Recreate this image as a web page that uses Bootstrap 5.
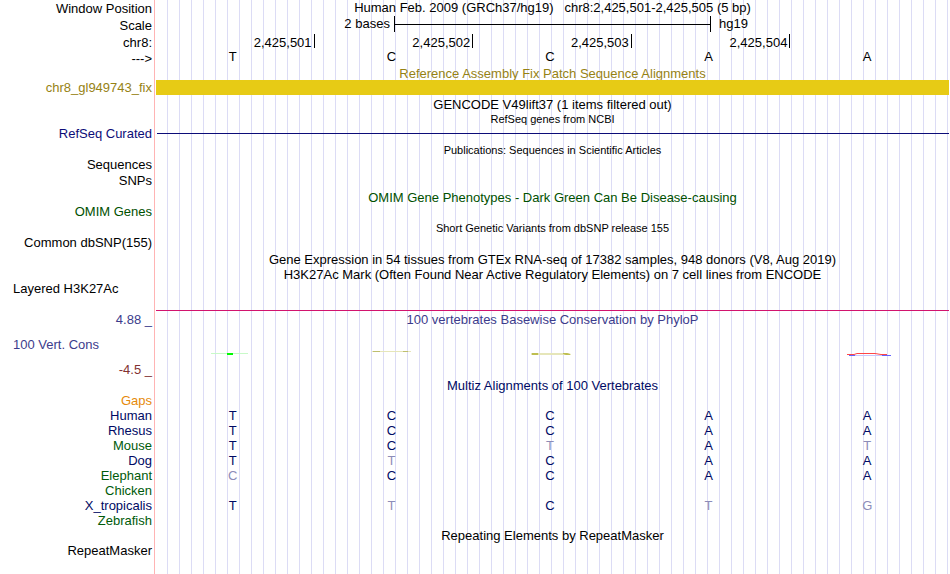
<!DOCTYPE html>
<html lang="en">

<head>
  <meta charset="UTF-8">
  <meta name="viewport" content="width=device-width, initial-scale=1.0">
  <title>Human hg19 chr8:2,425,501-2,425,505</title>
  <!-- Bootstrap CSS -->
  <link href="https://cdn.jsdelivr.net/npm/bootstrap@5.3.3/dist/css/bootstrap.min.css" rel="stylesheet">
  <!-- Custom CSS -->
  <style>
    body {
      font-family: "Liberation Sans", Arial, sans-serif;
      font-size: 13px;
      line-height: 15px;
      color: #000;
      background-color: #fff;
    }

    /* label column, pink divider and the vertical guide lines */
    .browser {
      padding-right: 1px;
      background-image:
        linear-gradient(90deg, #fff 154px, #ffb4b4 154px, #ffb4b4 155px, #fff 155px, #fff 156px, transparent 156px),
        repeating-linear-gradient(90deg, #dcdcf5 0, #dcdcf5 1px, transparent 1px, transparent 12px);
      background-position: 0 0, -1px 0;
      background-repeat: no-repeat, repeat;
      background-size: 100% 100%, 12px 100%;
    }

    .side {
      flex: 0 0 156px;
      width: 156px;
      padding: 0 4px 0 0;
      text-align: right;
      font-weight: 400;
      white-space: nowrap;
    }

    .side-left {
      padding-left: 13px;
      text-align: left;
    }

    .title {
      flex: 1 1 0;
      text-align: center;
      white-space: nowrap;
    }

    .h14 { height: 14px; line-height: 14px; }
    .h15 { height: 15px; line-height: 15px; }
    .h16 { height: 16px; line-height: 18px; }
    .h17 { height: 17px; line-height: 19px; }
    .h18 { height: 18px; line-height: 18px; }
    .h26 { height: 26px; line-height: 20px; }
    .line-16 { line-height: 16px; }
    .line-20 { line-height: 20px; }

    .note { font-size: 11px; }

    .cell {
      width: 20%;
      padding: 0 5px 0 0;
      text-align: center;
    }

    .tick {
      width: 20%;
      height: 14px;
      padding-right: 2px;
      text-align: right;
      border-right: 1px solid #000;
    }

    .ruler-side { width: 30%; }

    .ruler {
      width: 40%;
      height: 16px;
      border: solid #000;
      border-width: 0 1px;
    }

    .ruler hr {
      width: 100%;
      margin: 0;
      border-color: #000;
      opacity: 1;
    }

    .patch-bar { background-color: #e7cb15; }
    .curated-line { height: 1px; margin-left: 1px; background-color: #0c0c78; }
    .signal-line { height: 1px; margin: 14px 0 0 156px; background-color: #d2146e; }

    .olive { color: #968214; }
    .navy { color: #0c0c78; }
    .blue { color: #000a64; }
    .green { color: #005a0a; }
    .dark-green { color: #005000; }
    .slate { color: #3c3c8c; }
    .maroon { color: #823232; }
    .orange { color: #e68a0a; }

    .species { table-layout: fixed; }
    .species td { color: #000a64; }
    .species td.diff { color: #8c8cb8; }
  </style>
</head>

<body>

  <main class="browser min-vh-100">
    <!-- Position and scale -->
    <div class="d-flex h16">
      <div class="side">Window Position</div>
      <div class="title h15">Human Feb. 2009 (GRCh37/hg19) &nbsp; chr8:2,425,501-2,425,505 (5 bp)</div>
    </div>
    <div class="d-flex h18">
      <div class="side line-20">Scale</div>
      <div class="d-flex flex-fill align-items-center h16">
        <div class="ruler-side text-end pe-1">2 bases</div>
        <div class="ruler d-flex align-items-center"><hr></div>
        <div class="ruler-side ps-2">hg19</div>
      </div>
    </div>
    <div class="d-flex h16">
      <div class="side">chr8:</div>
      <div class="d-flex flex-fill">
        <div class="tick">2,425,501</div>
        <div class="tick">2,425,502</div>
        <div class="tick">2,425,503</div>
        <div class="tick">2,425,504</div>
      </div>
    </div>
    <div class="d-flex h16">
      <div class="side">---&gt;</div>
      <div class="d-flex flex-fill h14">
        <div class="cell">T</div>
        <div class="cell">C</div>
        <div class="cell">C</div>
        <div class="cell">A</div>
        <div class="cell">A</div>
      </div>
    </div>

    <!-- Fix patches -->
    <div class="d-flex h14 olive">
      <div class="side"></div>
      <div class="title line-16">Reference Assembly Fix Patch Sequence Alignments</div>
    </div>
    <div class="d-flex h15 olive">
      <div class="side">chr8_gl949743_fix</div>
      <div class="patch-bar flex-fill position-relative"></div>
    </div>

    <!-- Genes -->
    <div class="d-flex h17">
      <div class="side"></div>
      <div class="title">GENCODE V49lift37 (1 items filtered out)</div>
    </div>
    <div class="d-flex h14 note">
      <div class="side"></div>
      <div class="title">RefSeq genes from NCBI</div>
    </div>
    <div class="d-flex h15 navy">
      <div class="side">RefSeq Curated</div>
      <div class="d-flex flex-fill align-items-center">
        <div class="curated-line flex-fill"></div>
      </div>
    </div>

    <!-- Literature -->
    <div class="d-flex h16 note">
      <div class="side"></div>
      <div class="title">Publications: Sequences in Scientific Articles</div>
    </div>
    <div class="side h15">Sequences</div>
    <div class="side h16">SNPs</div>

    <!-- Phenotypes and variants -->
    <div class="d-flex h17 dark-green">
      <div class="side"></div>
      <div class="title">OMIM Gene Phenotypes - Dark Green Can Be Disease-causing</div>
    </div>
    <div class="side h14 dark-green">OMIM Genes</div>
    <div class="d-flex h17 note">
      <div class="side"></div>
      <div class="title">Short Genetic Variants from dbSNP release 155</div>
    </div>
    <div class="side h14">Common dbSNP(155)</div>

    <!-- Expression and regulation -->
    <div class="d-flex h17">
      <div class="side"></div>
      <div class="title">Gene Expression in 54 tissues from GTEx RNA-seq of 17382 samples, 948 donors (V8, Aug 2019)</div>
    </div>
    <div class="d-flex h15">
      <div class="side"></div>
      <div class="title">H3K27Ac Mark (Often Found Near Active Regulatory Elements) on 7 cell lines from ENCODE</div>
    </div>
    <div class="side side-left h14">Layered H3K27Ac</div>
    <div class="signal-line"></div>

    <!-- Conservation -->
    <div class="d-flex h18 slate">
      <div class="side">4.88 _</div>
      <div class="title">100 vertebrates Basewise Conservation by PhyloP</div>
    </div>
    <div class="d-flex pt-2 slate">
      <div class="side side-left h15">100 Vert. Cons</div>
      <div class="d-flex flex-fill align-items-end">
        <div class="cell"></div>
        <div class="cell d-flex justify-content-center">
          <svg width="48" height="8" viewBox="0 0 48 8">
            <path d="M5 7h39v1H5z" fill="#e6e6b9"/>
            <path d="M6 7h7v1H6zM36 7h5v1h-5z" fill="#bebe6e"/>
          </svg>
        </div>
      </div>
    </div>
    <div class="d-flex h26 maroon">
      <div class="side pt-2">-4.5 _</div>
      <div class="d-flex flex-fill">
        <div class="cell d-flex justify-content-center">
          <svg width="48" height="8" viewBox="0 0 48 8" shape-rendering="crispEdges">
            <path d="M2 1h37v1H2z" fill="#c8fac8"/>
            <path d="M18 1h6v2h-6z" fill="#00fa00"/>
          </svg>
        </div>
        <div class="cell"></div>
        <div class="cell d-flex justify-content-center">
          <svg width="48" height="8" viewBox="0 0 48 8">
            <path d="M5 1h37l3 1v1H5z" fill="#e6e6b9"/>
            <path d="M6 1h6v2H6zM37 1h4l3 1v1h-4l-3-1z" fill="#bebe50"/>
          </svg>
        </div>
        <div class="cell"></div>
        <div class="cell d-flex justify-content-center">
          <svg width="48" height="8" viewBox="0 0 48 8">
            <path d="M6 3.500h42" stroke="#c8c8ff"/>
            <path d="M6 3.500h6M39 3.500h9" stroke="#6464ff"/>
            <path d="M4 2.500h7L14 1.500h18l6 1h6" fill="none" stroke="#ff4646"/>
          </svg>
        </div>
      </div>
    </div>

    <!-- Alignments -->
    <div class="d-flex h15 blue">
      <div class="side"></div>
      <div class="title">Multiz Alignments of 100 Vertebrates</div>
    </div>
    <table class="species w-100">
      <colgroup>
        <col style="width: 156px">
        <col span="5">
      </colgroup>
      <tbody>
        <tr class="h15"><th scope="row" class="side orange">Gaps</th><td class="cell"></td><td class="cell"></td><td class="cell"></td><td class="cell"></td><td class="cell"></td></tr>
        <tr class="h15"><th scope="row" class="side blue">Human</th><td class="cell">T</td><td class="cell">C</td><td class="cell">C</td><td class="cell">A</td><td class="cell">A</td></tr>
        <tr class="h15"><th scope="row" class="side blue">Rhesus</th><td class="cell">T</td><td class="cell">C</td><td class="cell">C</td><td class="cell">A</td><td class="cell">A</td></tr>
        <tr class="h15"><th scope="row" class="side green">Mouse</th><td class="cell">T</td><td class="cell">C</td><td class="cell diff">T</td><td class="cell">A</td><td class="cell diff">T</td></tr>
        <tr class="h15"><th scope="row" class="side blue">Dog</th><td class="cell">T</td><td class="cell diff">T</td><td class="cell">C</td><td class="cell">A</td><td class="cell">A</td></tr>
        <tr class="h15"><th scope="row" class="side green">Elephant</th><td class="cell diff">C</td><td class="cell">C</td><td class="cell">C</td><td class="cell">A</td><td class="cell">A</td></tr>
        <tr class="h15"><th scope="row" class="side green">Chicken</th><td class="cell"></td><td class="cell"></td><td class="cell"></td><td class="cell"></td><td class="cell"></td></tr>
        <tr class="h15"><th scope="row" class="side blue">X_tropicalis</th><td class="cell">T</td><td class="cell diff">T</td><td class="cell">C</td><td class="cell diff">T</td><td class="cell diff">G</td></tr>
        <tr class="h15"><th scope="row" class="side green">Zebrafish</th><td class="cell"></td><td class="cell"></td><td class="cell"></td><td class="cell"></td><td class="cell"></td></tr>
      </tbody>
    </table>

    <!-- Repeats -->
    <div class="d-flex h15">
      <div class="side"></div>
      <div class="title">Repeating Elements by RepeatMasker</div>
    </div>
    <div class="side h15">RepeatMasker</div>
  </main>

  <!-- Bootstrap Bundle with Popper -->
  <script src="https://cdn.jsdelivr.net/npm/bootstrap@5.3.3/dist/js/bootstrap.bundle.min.js"></script>
</body>

</html>
